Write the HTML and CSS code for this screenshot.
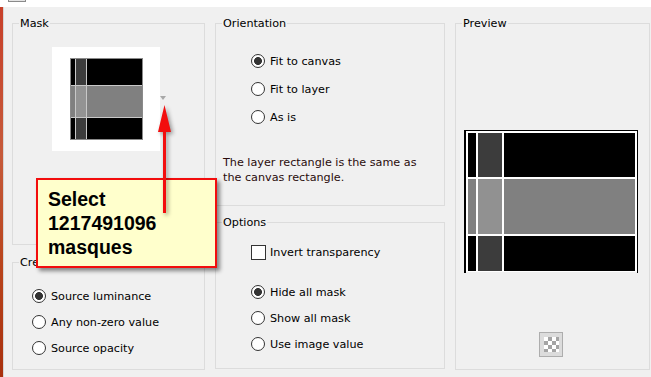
FILE: index.html
```html
<!DOCTYPE html>
<html lang="en">
<head>
  <meta charset="UTF-8">
  <meta name="viewport" content="width=device-width, initial-scale=1.0">
  <title>Load Mask From Disk</title>
  <link rel="stylesheet" href="styles.css">
</head>
<body>
  <div class="topbar"><span class="tab-stub"></span></div>
  <div class="window">
    <div class="edge"></div>
    <div class="dialog">
      <div class="col col-left">
        <div class="group mask">
          <div class="group-title">Mask</div>
          <div class="mask-pick">
            <div class="mask-thumb">
              <svg width="73" height="82" viewBox="0 0 73 82" shape-rendering="crispEdges">
                <rect width="73" height="82" fill="#000"/>
                <rect x="5" y="0" width="11" height="82" fill="#3c3c3c"/>
                <rect x="0" y="27" width="73" height="32" fill="#808080"/>
                <rect x="5" y="27" width="11" height="32" fill="#939393"/>
                <path d="M5.5 0V82M16.5 0V82M0 27.5H73M0 59.5H73" stroke="#c8c8c8" fill="none"/>
                <rect x="0.5" y="0.5" width="72" height="81" fill="none" stroke="#8a8a8a"/>
              </svg>
            </div>
            <span class="drop"></span>
          </div>
        </div>
        <div class="group create">
          <div class="group-title">Create mask from</div>
          <div class="choices">
            <label class="opt"><input type="radio" name="src" checked>Source luminance</label>
            <label class="opt"><input type="radio" name="src">Any non-zero value</label>
            <label class="opt"><input type="radio" name="src">Source opacity</label>
          </div>
        </div>
      </div>

      <div class="col col-mid">
        <div class="group orient">
          <div class="group-title">Orientation</div>
          <div class="choices">
            <label class="opt"><input type="radio" name="fit" checked>Fit to canvas</label>
            <label class="opt"><input type="radio" name="fit">Fit to layer</label>
            <label class="opt"><input type="radio" name="fit">As is</label>
          </div>
          <p class="note">The layer rectangle is the same as<br>the canvas rectangle.</p>
        </div>
        <div class="group options">
          <div class="group-title">Options</div>
          <div class="choices">
            <label class="opt"><input type="checkbox">Invert transparency</label>
            <div class="spacer"></div>
            <label class="opt"><input type="radio" name="hide" checked>Hide all mask</label>
            <label class="opt"><input type="radio" name="hide">Show all mask</label>
            <label class="opt"><input type="radio" name="hide">Use image value</label>
          </div>
        </div>
      </div>

      <div class="col col-right">
        <div class="group preview">
          <div class="group-title">Preview</div>
          <svg class="preview-img" width="174" height="143" viewBox="0 0 174 143" shape-rendering="crispEdges">
            <rect x="2" y="1" width="171" height="141" fill="#fff"/>
            <rect x="0" y="0" width="174" height="1" fill="#000"/>
            <rect x="0" y="0" width="2" height="143" fill="#000"/>
            <rect x="173" y="0" width="1" height="143" fill="#000"/>
            <rect x="4" y="3" width="8" height="44" fill="#000"/>
            <rect x="14" y="3" width="24" height="44" fill="#3c3c3c"/>
            <rect x="40" y="3" width="131" height="44" fill="#000"/>
            <rect x="4" y="49" width="8" height="55" fill="#808080"/>
            <rect x="14" y="49" width="24" height="55" fill="#919191"/>
            <rect x="40" y="49" width="131" height="55" fill="#808080"/>
            <rect x="4" y="106" width="8" height="35" fill="#000"/>
            <rect x="14" y="106" width="24" height="35" fill="#3c3c3c"/>
            <rect x="40" y="106" width="131" height="35" fill="#000"/>
          </svg>
          <button class="checker-btn"><span class="checker"></span></button>
        </div>
      </div>
    </div>
  </div>

  <div class="callout">Select<br>1217491096<br>masques</div>
  <svg class="pointer" width="30" height="120" viewBox="0 0 30 120">
    <path d="M14.5 5L21 32H16V113H13V32H8Z" fill="#f20d0d"/>
  </svg>
</body>
</html>
```

FILE: styles.css
```css
* {
  box-sizing: border-box;
}

body {
  margin: 0;
  background-color: #f0f0f0;
  font-family: "DejaVu Sans", sans-serif;
  font-size: 11.2px;
  color: #000;
  overflow: hidden;
}

.topbar {
  height: 7px;
  background-color: #fff;
}

.tab-stub {
  display: block;
  width: 18px;
  height: 2px;
  margin-left: 8px;
  border: 1px solid #8a8a8a;
  border-top: none;
  background-color: #e4e4e4;
}

.window {
  display: flex;
  height: 370px;
}

.edge {
  width: 4px;
  background: linear-gradient(#c8402a, #c65a3a 40%, #b9441c 70%, #a8300e);
  border-right: 1px solid #d6d6d6;
}

.dialog {
  display: flex;
  gap: 10px;
  padding: 16px 0 0 8px;
}

.col {
  display: flex;
  flex-direction: column;
}

.col-left {
  width: 193px;
  gap: 17px;
}

.col-mid {
  width: 230px;
  gap: 16px;
}

.col-right {
  width: 195px;
}

.group {
  border: 1px solid #dcdcdc;
}

.group-title {
  width: fit-content;
  margin: -7px 0 0 6px;
  padding: 0 1px;
  line-height: 13px;
  background-color: #f0f0f0;
  white-space: nowrap;
}

.mask {
  height: 222px;
}

.create {
  height: 108px;
}

.orient {
  height: 183px;
}

.options {
  height: 147px;
}

.preview {
  height: 347px;
}

/* mask picker */
.mask-pick {
  display: flex;
  align-items: center;
  margin: 17px 0 0 39px;
}

.mask-thumb {
  width: 108px;
  height: 104px;
  padding: 11px 0 0 18px;
  background-color: #fff;
}

.mask-thumb svg {
  display: block;
}

.drop {
  width: 0;
  height: 0;
  margin: -2px 0 0 0;
  border-top: 4px solid #a8a8a8;
  border-left: 3.5px solid transparent;
  border-right: 3.5px solid transparent;
}

/* radio / check rows */
.choices {
  display: flex;
  flex-direction: column;
}

.create .choices {
  padding: 14px 0 0 19px;
}

.orient .choices {
  padding: 17px 0 0 35px;
}

.options .choices {
  padding: 10px 0 0 35px;
}

.opt {
  display: flex;
  align-items: center;
  height: 26px;
  white-space: nowrap;
}

.orient .opt {
  height: 28px;
}

.opt input {
  appearance: none;
  -webkit-appearance: none;
  flex: none;
  width: 14px;
  height: 14px;
  margin: 0 5px 0 0;
  border: 1px solid #333;
  border-radius: 50%;
  background-color: #fff;
}

.opt input:checked {
  background: radial-gradient(circle, #333 0 3.6px, #fff 4.3px);
}

.opt input[type="checkbox"] {
  width: 15px;
  height: 15px;
  margin-right: 4px;
  border-radius: 0;
}

.spacer {
  height: 14px;
}

.note {
  margin: 24px 0 0 7px;
  line-height: 15px;
  color: #2a0c0c;
}

/* preview */
.preview-img {
  display: block;
  margin: 100px 0 0 8px;
}

.checker-btn {
  display: flex;
  align-items: center;
  justify-content: center;
  width: 24px;
  height: 25px;
  margin: 59px 0 0 83px;
  padding: 0;
  border: 1px solid #adadad;
  background-color: #dcdcdc;
}

.checker {
  width: 15px;
  height: 15px;
  background: conic-gradient(#a4a4a4 25%, #fff 0 50%, #a4a4a4 0 75%, #fff 0) 0 0 / 8px 8px;
}

/* annotation overlay */
.callout {
  position: absolute;
  left: 36px;
  top: 178px;
  width: 181px;
  height: 90px;
  padding: 7px 0 0 10px;
  border: 2px solid #f20d0d;
  background-color: #ffffcc;
  box-shadow: 3px 3px 4px rgba(0, 0, 0, 0.45);
  font-family: "Liberation Sans", Arial, sans-serif;
  font-weight: bold;
  font-size: 19.5px;
  line-height: 24px;
  color: #000;
}

.pointer {
  position: absolute;
  left: 150px;
  top: 100px;
  filter: drop-shadow(2px 2px 2px rgba(0, 0, 0, 0.4));
}
```
